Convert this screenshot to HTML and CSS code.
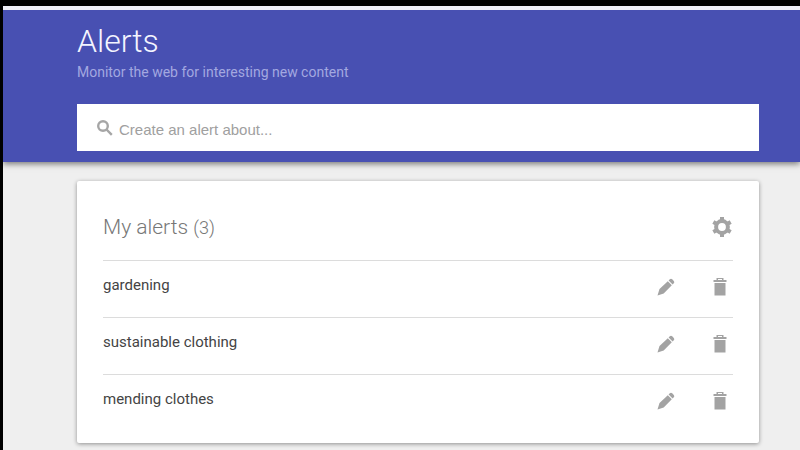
FILE: index.html
```html
<!DOCTYPE html>
<html lang="en">
<head>
    <meta charset="UTF-8">
    <meta name="viewport" content="width=device-width, initial-scale=1.0">
    <title>Alerts</title>
    <link rel="stylesheet" href="styles.css">
</head>
<body>

<!-- Shared icons -->
<svg class="icon-defs" aria-hidden="true">
    <symbol id="icon-edit" viewBox="0 0 18 18">
        <path d="M.5 17.500l2-6.500 8.300-7.700 4 4-8.100 8.200zM11.600 2.600l1.200-1.300q1.200-1.100 2.400 0l1.600 1.600q1.100 1.200 0 2.400l-1.200 1.300z"/>
    </symbol>
    <symbol id="icon-delete" viewBox="0 0 14 18">
        <path fill-rule="evenodd" d="M3.500 2V0h7v2H13.500v2H.5V2zM5 2h4V1H5zM1.500 5h11v12.500h-11z"/>
    </symbol>
</svg>

<header>
    <h1>Alerts</h1>
    <p>Monitor the web for interesting new content</p>
    <form class="search-box">
        <label for="search">
            <svg class="icon-search" viewBox="0 0 16 16" aria-label="Search">
                <circle cx="6" cy="6" r="4.800"/>
                <path d="M9.500 9.500l5.300 5.300"/>
            </svg>
        </label>
        <input type="text" id="search" placeholder="Create an alert about...">
    </form>
</header>

<main>
    <section class="card">
        <div class="card-header">
            <h2>My alerts <span class="count">(3)</span></h2>
            <button type="button" aria-label="Settings">
                <svg class="icon-settings" viewBox="0 0 20 20">
                    <circle cx="10" cy="10" r="5.900"/>
                    <path d="M10 0v4M10 16v4M1.340 5l3.460 2M15.200 13l3.460 2M1.340 15l3.460-2M15.200 7l3.460-2"/>
                </svg>
            </button>
        </div>
        <ul class="alerts">
            <li>
                <a href="#">gardening</a>
                <button type="button" aria-label="Edit gardening"><svg class="icon-edit"><use href="#icon-edit"/></svg></button>
                <button type="button" aria-label="Delete gardening"><svg class="icon-delete"><use href="#icon-delete"/></svg></button>
            </li>
            <li>
                <a href="#">sustainable clothing</a>
                <button type="button" aria-label="Edit sustainable clothing"><svg class="icon-edit"><use href="#icon-edit"/></svg></button>
                <button type="button" aria-label="Delete sustainable clothing"><svg class="icon-delete"><use href="#icon-delete"/></svg></button>
            </li>
            <li>
                <a href="#">mending clothes</a>
                <button type="button" aria-label="Edit mending clothes"><svg class="icon-edit"><use href="#icon-edit"/></svg></button>
                <button type="button" aria-label="Delete mending clothes"><svg class="icon-delete"><use href="#icon-delete"/></svg></button>
            </li>
        </ul>
    </section>
</main>

</body>
</html>
```

FILE: styles.css
```css
* {
    box-sizing: border-box;
}
html {
    background-color: #efefef;
}
body {
    margin: 0;
    min-height: 100vh;
    border-top: 6px solid #000;
    border-left: 3px solid #000;
    font-family: Roboto, Arial, sans-serif;
    color: #444;
}
.icon-defs {
    display: none;
}
header {
    background-color: #4850b2;
    border-top: 4px solid #f0f0f8;
    padding: 11px 41px 11px 74px;
    box-shadow: 0 2px 6px rgba(0, 0, 0, 0.5);
}
h1 {
    margin: 0;
    color: #f4f5ff;
    font-size: 32px;
    font-weight: 300;
    line-height: 40px;
}
header p {
    margin: 0 0 21px;
    color: #a3a8e0;
    font-size: 14px;
    font-weight: 400;
    line-height: 22px;
}
.search-box {
    display: flex;
    align-items: center;
    height: 47px;
    padding: 0 20px;
    background-color: #fff;
}
.search-box label {
    display: flex;
    margin-right: 6px;
}
.search-box input {
    flex: 1;
    min-width: 0;
    padding: 3px 0 0;
    border: none;
    outline: none;
    background: none;
    font-family: "Liberation Sans", Arial, sans-serif;
    font-size: 15px;
}
.search-box input::placeholder {
    color: #a0a0a0;
}
.icon-search {
    width: 16px;
    height: 16px;
    fill: none;
    stroke: #a6a6a6;
    stroke-width: 2.400;
}
main {
    padding: 19px 41px 7px 74px;
}
.card {
    padding: 22px 26px 12px;
    background-color: #fff;
    border-radius: 2px;
    box-shadow: 0 1px 4px rgba(0, 0, 0, 0.4);
}
.card-header {
    display: flex;
    align-items: center;
    justify-content: space-between;
    height: 47px;
    margin-bottom: 10px;
}
h2 {
    margin: 0;
    color: #777;
    font-size: 21px;
    font-weight: 300;
}
.count {
    font-size: 18px;
}
button {
    display: flex;
    align-items: center;
    justify-content: center;
    width: 22px;
    height: 24px;
    padding: 0;
    border: none;
    background: none;
    cursor: pointer;
}
.icon-settings {
    width: 20px;
    height: 20px;
    fill: none;
    stroke: #a3a3a3;
    stroke-width: 4;
}
.icon-edit {
    width: 18px;
    height: 18px;
    fill: #a3a3a3;
}
.icon-delete {
    width: 14px;
    height: 18px;
    fill: #a3a3a3;
}
.alerts {
    margin: 0;
    padding: 0;
    list-style: none;
}
.alerts li {
    display: flex;
    align-items: center;
    gap: 32px;
    height: 57px;
    padding: 0 2px 5px 0;
    border-top: 1px solid #dcdcdc;
}
.alerts a {
    flex: 1;
    padding-bottom: 3px;
    color: #444;
    font-size: 15px;
    text-decoration: none;
}
```
